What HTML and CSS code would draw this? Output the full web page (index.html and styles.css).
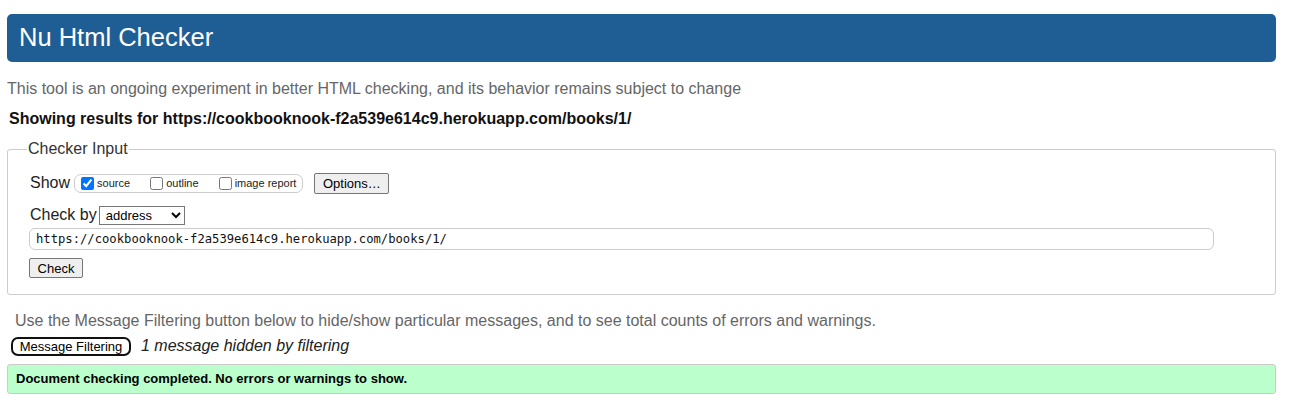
FILE: index.html
```html
<!DOCTYPE html>
<html>
<head>
<meta charset="utf-8">
<title>Nu Html Checker</title>
<link rel="stylesheet" href="styles.css">
</head>
<body>
<h1 class="title">Nu Html Checker</h1>
<p class="intro">This tool is an ongoing experiment in better HTML checking, and its behavior remains subject to change</p>
<p class="showing">Showing results for https://cookbooknook-f2a539e614c9.herokuapp.com/books/1/</p>
<form class="form">
  <fieldset class="fieldset">
    <legend class="legend">Checker Input</legend>
    <div class="row show-row">
      <span class="label">Show</span>
      <span class="pill">
        <label class="opt"><input type="checkbox" class="cb" checked> source</label>
        <label class="opt"><input type="checkbox" class="cb"> outline</label>
        <label class="opt"><input type="checkbox" class="cb"> image report</label>
      </span>
      <button type="button" class="btn options">Options…</button>
    </div>
    <div class="row by-row">
      <span class="label">Check by</span>
      <select class="select"><option>address</option></select>
    </div>
    <div class="url">https://cookbooknook-f2a539e614c9.herokuapp.com/books/1/</div>
    <div class="row">
      <button type="button" class="btn check">Check</button>
    </div>
  </fieldset>
</form>
<p class="filter-info">Use the Message Filtering button below to hide/show particular messages, and to see total counts of errors and warnings.</p>
<div class="filter-row">
  <button type="button" class="filter-btn">Message Filtering</button>
  <span class="hidden-note">1 message hidden by filtering</span>
</div>
<div class="success">Document checking completed. No errors or warnings to show.</div>
</body>
</html>
```
FILE: styles.css
```css
html, body {
  margin: 0;
  padding: 0;
  background: #fff;
}
body {
  padding: 14px 17px 0 7px;
  font-family: "Liberation Sans", Arial, sans-serif;
  font-size: 16px;
  color: #000;
}
.title {
  margin: 0;
  height: 48px;
  box-sizing: border-box;
  padding: 8px 12px 0;
  background: #1f5e94;
  color: #fff;
  font-weight: normal;
  font-size: 25.5px;
  line-height: 30px;
  border-radius: 5px;
}
.intro {
  margin: 17px 0 0;
  color: #666;
  line-height: 20px;
}
.showing {
  margin: 10px 0 0 2px;
  font-weight: bold;
  line-height: 20px;
  color: #111;
}
.form {
  margin: 10px 0 0;
}
.fieldset {
  margin: 0;
  padding: 8px 0 16px 22px;
  border: 1px solid #ccc;
  border-radius: 3px;
}
.legend {
  padding: 0 1px;
  margin-left: -3px;
  color: #333;
  font-size: 16px;
  line-height: 20px;
}
.row {
  display: flex;
  align-items: center;
}
.show-row {
  height: 22px;
  margin-top: 5px;
}
.label {
  color: #222;
  font-size: 16px;
  margin-right: 4px;
}
.pill {
  display: inline-flex;
  align-items: center;
  height: 19px;
  box-sizing: border-box;
  border: 1px solid #ccc;
  border-radius: 7px;
  padding: 0 6px 0 6px;
  font-size: 11px;
  gap: 20px;
}
.opt {
  display: inline-flex;
  align-items: center;
  color: #222;
  white-space: pre;
}
.cb {
  width: 13px;
  height: 13px;
  margin: 0;
}
.btn {
  font-family: "Liberation Sans", Arial, sans-serif;
  font-size: 13px;
  background: #efefef;
  border: 1px solid #767676;
  border-radius: 2px;
  color: #000;
  padding: 1px 6px;
  height: 21px;
}
.options {
  margin-left: 11px;
  width: 75px;
}
.by-row {
  margin-top: 11px;
  height: 20px;
}
.by-row .label {
  margin-right: 2px;
}
.select {
  font-family: "Liberation Sans", Arial, sans-serif;
  font-size: 13px;
  height: 19px;
  width: 86px;
  border: 1px solid #767676;
  border-radius: 0;
  background: #fff;
  padding: 0 0 0 2px;
}
.url {
  margin-top: 3px;
  width: 1185px;
  height: 22px;
  box-sizing: border-box;
  border: 1px solid #ccc;
  border-radius: 6px;
  padding: 0 6px;
  font-family: "DejaVu Sans Mono", "Liberation Mono", monospace;
  font-size: 12.2px;
  line-height: 20px;
  color: #111;
  margin-left: -1px;
}
.row .check {
  margin-top: 8px;
  margin-left: -1px;
  width: 54px;
  height: 20px;
  padding: 0 6px;
}
.filter-info {
  margin: 16px 0 0 8px;
  color: #666;
  line-height: 20px;
}
.filter-row {
  display: flex;
  align-items: center;
  margin: 5px 0 0 4px;
  height: 20px;
}
.filter-btn {
  font-family: "Liberation Sans", Arial, sans-serif;
  font-size: 13px;
  height: 19px;
  width: 120px;
  padding: 0 3px;
  border: 2px solid #111;
  border-radius: 7px;
  background: #fff;
  color: #000;
}
.hidden-note {
  margin-left: 10px;
  font-style: italic;
  color: #222;
}
.success {
  margin-top: 8px;
  height: 30px;
  box-sizing: border-box;
  background: #bbffcc;
  border: 1px solid #ccc;
  border-radius: 3px;
  padding: 0 8px;
  font-size: 13px;
  line-height: 28px;
  font-weight: bold;
}
```
